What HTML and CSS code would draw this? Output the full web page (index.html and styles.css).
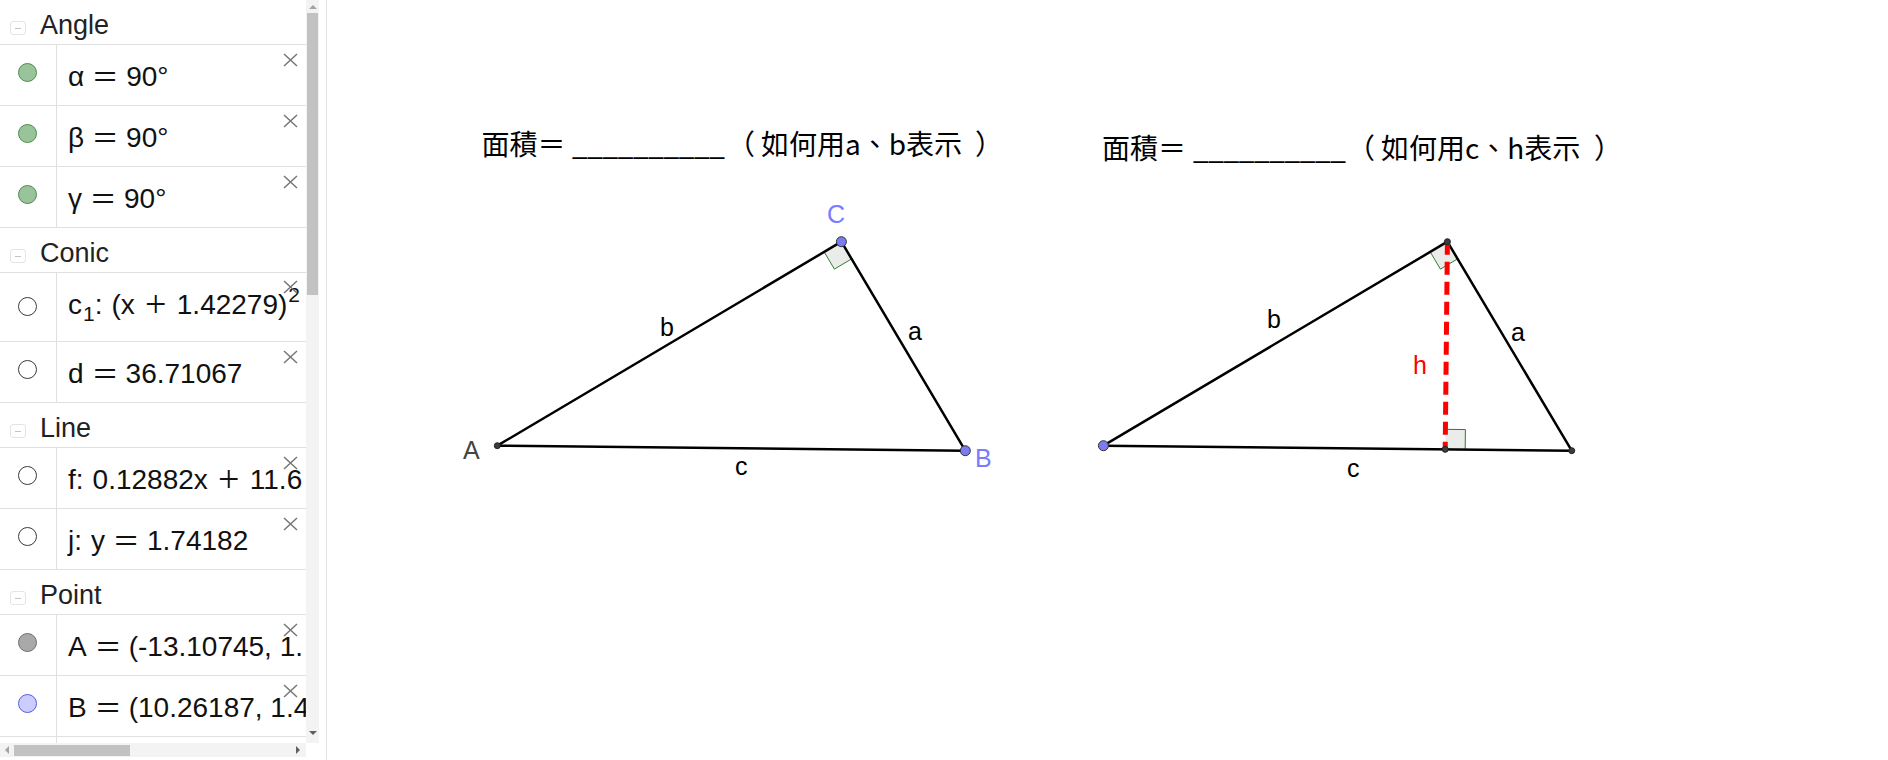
FILE: index.html
```html
<!DOCTYPE html>
<html lang="zh-Hant">
<head>
<meta charset="utf-8">
<title>GeoGebra</title>
<link rel="stylesheet" href="styles.css">
</head>
<body>
<div class="app">
  <aside class="algebra">
    <div class="av-viewport">
      <div class="group-head"><span class="toggle"></span><span class="group-title">Angle</span></div>
      <div class="item">
        <div class="marker"><span class="dot dot-angle"></span></div>
        <div class="formula">α<span class="op">=</span>90°</div>
        <svg class="close" viewBox="0 0 15 14"><path d="M1 1L14 13M14 1L1 13"/></svg>
      </div>
      <div class="item">
        <div class="marker"><span class="dot dot-angle"></span></div>
        <div class="formula">β<span class="op">=</span>90°</div>
        <svg class="close" viewBox="0 0 15 14"><path d="M1 1L14 13M14 1L1 13"/></svg>
      </div>
      <div class="item">
        <div class="marker"><span class="dot dot-angle"></span></div>
        <div class="formula">γ<span class="op">=</span>90°</div>
        <svg class="close" viewBox="0 0 15 14"><path d="M1 1L14 13M14 1L1 13"/></svg>
      </div>

      <div class="group-head"><span class="toggle"></span><span class="group-title">Conic</span></div>
      <div class="item item-tall">
        <div class="marker"><span class="dot dot-hidden"></span></div>
        <div class="formula">c<span class="sub">1</span><span class="colon">:</span>(x<span class="op op-plus">+</span>1.42279)<span class="sup">2</span></div>
        <svg class="close close-tall" viewBox="0 0 15 14"><path d="M1 1L14 13M14 1L1 13"/></svg>
      </div>
      <div class="item">
        <div class="marker"><span class="dot dot-hidden"></span></div>
        <div class="formula">d<span class="op">=</span>36.71067</div>
        <svg class="close" viewBox="0 0 15 14"><path d="M1 1L14 13M14 1L1 13"/></svg>
      </div>

      <div class="group-head"><span class="toggle"></span><span class="group-title">Line</span></div>
      <div class="item">
        <div class="marker"><span class="dot dot-hidden"></span></div>
        <div class="formula">f<span class="colon">:</span>0.12882x<span class="op op-plus">+</span>11.6</div>
        <svg class="close" viewBox="0 0 15 14"><path d="M1 1L14 13M14 1L1 13"/></svg>
      </div>
      <div class="item">
        <div class="marker"><span class="dot dot-hidden"></span></div>
        <div class="formula">j<span class="colon">:</span>y<span class="op">=</span>1.74182</div>
        <svg class="close" viewBox="0 0 15 14"><path d="M1 1L14 13M14 1L1 13"/></svg>
      </div>

      <div class="group-head"><span class="toggle"></span><span class="group-title">Point</span></div>
      <div class="item">
        <div class="marker"><span class="dot dot-gray"></span></div>
        <div class="formula">A<span class="op">=</span>(-13.10745, 1.</div>
        <svg class="close" viewBox="0 0 15 14"><path d="M1 1L14 13M14 1L1 13"/></svg>
      </div>
      <div class="item">
        <div class="marker"><span class="dot dot-blue"></span></div>
        <div class="formula">B<span class="op">=</span>(10.26187, 1.4</div>
        <svg class="close" viewBox="0 0 15 14"><path d="M1 1L14 13M14 1L1 13"/></svg>
      </div>
      <div class="item">
        <div class="marker"></div>
        <div class="formula"></div>
      </div>
    </div>

    <div class="vscroll">
      <span class="arrow arrow-up"></span>
      <span class="vthumb"></span>
      <span class="vspace"></span>
      <span class="arrow arrow-down"></span>
    </div>
    <div class="hscroll">
      <span class="arrow arrow-left"></span>
      <span class="hthumb"></span>
      <span class="hspace"></span>
      <span class="arrow arrow-right"></span>
    </div>
    <div class="corner"></div>
  </aside>

  <main class="graphics">
    <svg class="canvas" viewBox="327 0 1561 760" width="1561" height="760">
      <!-- titles -->
      <text class="title" y="155"><tspan x="481.5">面積＝</tspan><tspan x="572" class="blank">__________</tspan><tspan x="727">（</tspan><tspan x="761">如何用a、b表示</tspan><tspan x="975">）</tspan></text>
      <text class="title" y="159"><tspan x="1102">面積＝</tspan><tspan x="1193" class="blank">__________</tspan><tspan x="1347">（</tspan><tspan x="1381">如何用c、h表示</tspan><tspan x="1594">）</tspan></text>

      <!-- triangle 1 -->
      <polygon class="ra-fill" points="841.4,241.7 824.2,251.9 834.4,269.1 851.6,258.9"/>
      <polyline class="ra-edge" points="824.2,251.9 834.4,269.1 851.6,258.9"/>
      <line class="seg" x1="497.3" y1="445.7" x2="841.4" y2="241.7"/>
      <line class="seg" x1="841.4" y1="241.7" x2="965.3" y2="450.7"/>
      <line class="seg" x1="497.3" y1="445.7" x2="965.3" y2="450.7"/>
      <circle class="pt-dark" cx="497.3" cy="445.7" r="3"/>
      <circle class="pt-blue" cx="841.4" cy="241.7" r="5"/>
      <circle class="pt-blue" cx="965.3" cy="450.7" r="5"/>
      <text class="lbl lbl-blue" x="827" y="223">C</text>
      <text class="lbl lbl-blue" x="975" y="467">B</text>
      <text class="lbl lbl-gray" x="463" y="459">A</text>
      <text class="lbl" x="660" y="336">b</text>
      <text class="lbl" x="908" y="340">a</text>
      <text class="lbl" x="735" y="475">c</text>

      <!-- triangle 2 -->
      <polygon class="ra-fill" points="1447.4,241.7 1430.2,251.9 1440.4,269.1 1457.6,258.9"/>
      <polyline class="ra-edge" points="1430.2,251.9 1440.4,269.1 1457.6,258.9"/>
      <polygon class="ra-fill" points="1445.2,449.35 1465.2,449.56 1465.4,429.56 1445.4,429.35"/>
      <polyline class="ra-edge" points="1465.2,449.56 1465.4,429.56 1445.4,429.35"/>
      <line class="seg" x1="1103.4" y1="445.7" x2="1447.4" y2="241.7"/>
      <line class="seg" x1="1447.4" y1="241.7" x2="1571.7" y2="450.7"/>
      <line class="seg" x1="1103.4" y1="445.7" x2="1571.7" y2="450.7"/>
      <line class="height" x1="1447.4" y1="241.7" x2="1445.2" y2="449.35"/>
      <circle class="pt-blue" cx="1103.4" cy="445.7" r="5"/>
      <circle class="pt-dark" cx="1447.4" cy="241.7" r="3"/>
      <circle class="pt-dark" cx="1571.7" cy="450.7" r="3"/>
      <circle class="pt-dark" cx="1445.2" cy="449.35" r="3"/>
      <text class="lbl" x="1267" y="328">b</text>
      <text class="lbl" x="1511" y="341">a</text>
      <text class="lbl lbl-red" x="1413" y="374">h</text>
      <text class="lbl" x="1347" y="477">c</text>
    </svg>
  </main>
</div>
</body>
</html>
```

FILE: styles.css
```css
* { box-sizing: border-box; }

html, body {
  margin: 0;
  padding: 0;
  width: 1888px;
  height: 760px;
  overflow: hidden;
  background: #ffffff;
  font-family: "Liberation Sans", Arial, sans-serif;
}

.app {
  display: flex;
  width: 1888px;
  height: 760px;
}

/* ---------- algebra view ---------- */
.algebra {
  width: 327px;
  height: 760px;
  flex: none;
  display: grid;
  grid-template-columns: 306px 13px;
  grid-template-rows: 743px 17px;
  border-right: 1px solid #e1e1e1;
  background: #ffffff;
}

.av-viewport {
  overflow: hidden;
  background: #ffffff;
}

.group-head {
  display: flex;
  height: 45px;
  border-bottom: 1px solid #e0e0e0;
}

.toggle {
  position: relative;
  width: 16px;
  height: 14px;
  margin: 21px 0 0 10px;
  border: 1px solid #e4e4e4;
  border-radius: 3px;
}

.toggle::after {
  content: "";
  position: absolute;
  left: 4px;
  top: 6px;
  width: 6px;
  height: 1px;
  background: #c4c4c4;
}

.group-title {
  margin-left: 14px;
  padding-top: 5px;
  line-height: 40px;
  font-size: 27px;
  color: #222222;
}

.item {
  position: relative;
  display: flex;
  height: 61px;
  border-bottom: 1px solid #e0e0e0;
}

.item-tall { height: 69px; }

.marker {
  width: 57px;
  flex: none;
  display: flex;
  justify-content: center;
  align-items: flex-start;
  padding-top: 18px;
  padding-right: 1px;
  border-right: 1px solid #e0e0e0;
}

.item-tall .marker { padding-top: 24px; }

.dot {
  width: 19px;
  height: 19px;
  border-radius: 50%;
  border: 1px solid #444444;
  background: #ffffff;
}

.dot-angle { background: #99c399; border-color: #4e8c4e; }
.dot-hidden { background: #ffffff; border-color: #3a3a3a; }
.dot-gray { background: #a9a9a9; border-color: #6e6e6e; }
.dot-blue { background: #ccccff; border-color: #5a5ae0; }

.formula {
  padding: 4px 0 0 11px;
  line-height: 56px;
  font-size: 28px;
  color: #111111;
  white-space: nowrap;
}

.op {
  display: inline-block;
  width: 42px;
  text-align: center;
  transform: scaleX(1.45);
}

.op-plus {
  line-height: 1;
  font-family: "Liberation Serif", "Times New Roman", serif;
  font-size: 38px;
  vertical-align: -3px;
  transform: none;
}

.colon {
  display: inline-block;
  margin-right: 9px;
}

.sub {
  font-size: 21px;
  line-height: 0;
  vertical-align: -7px;
  margin-left: 1px;
}

.sup {
  font-size: 21px;
  line-height: 0;
  vertical-align: 12px;
  margin-left: 1px;
}

.close {
  position: absolute;
  right: 8px;
  top: 8px;
  width: 15px;
  height: 14px;
}

.close-tall { top: 7px; }

.close path {
  stroke: #767676;
  stroke-width: 1.5;
  fill: none;
}

/* scrollbars */
.vscroll {
  display: flex;
  flex-direction: column;
  align-items: center;
  background: #f3f3f3;
  padding: 0 1px;
}

.vthumb {
  width: 11px;
  height: 282px;
  margin-top: 4px;
  background: #c2c2c2;
}

.vspace { flex: 1; }

.hscroll {
  display: flex;
  align-items: center;
  background: #f3f3f3;
  height: 14px;
}

.hthumb {
  width: 116px;
  height: 11px;
  margin-left: 5px;
  background: #c2c2c2;
}

.hspace { flex: 1; }

.corner { background: #ffffff; }

.arrow {
  width: 0;
  height: 0;
  flex: none;
}

.arrow-up {
  margin-top: 5px;
  border-left: 4px solid transparent;
  border-right: 4px solid transparent;
  border-bottom: 4px solid #a3a3a3;
}

.arrow-down {
  margin-bottom: 8px;
  border-left: 4px solid transparent;
  border-right: 4px solid transparent;
  border-top: 4px solid #606060;
}

.arrow-left {
  margin-left: 5px;
  border-top: 4px solid transparent;
  border-bottom: 4px solid transparent;
  border-right: 4px solid #a3a3a3;
}

.arrow-right {
  margin-right: 6px;
  border-top: 4px solid transparent;
  border-bottom: 4px solid transparent;
  border-left: 4px solid #606060;
}

/* ---------- graphics view ---------- */
.graphics {
  flex: 1;
  height: 760px;
  background: #ffffff;
}

.canvas { display: block; }

.title {
  font-family: "Noto Sans CJK TC", "Noto Sans CJK SC", sans-serif;
  font-size: 28px;
  fill: #000000;
}

.blank { letter-spacing: -0.4px; }

.seg {
  stroke: #000000;
  stroke-width: 2.5;
  stroke-linecap: round;
}

.height {
  stroke: #ff0000;
  stroke-width: 5;
  stroke-dasharray: 13 7;
}

.ra-fill {
  fill: #e9ece9;
  stroke: none;
}

.ra-edge {
  fill: none;
  stroke: #2f7d2f;
  stroke-width: 1;
}

.pt-blue {
  fill: #7b7bf2;
  stroke: #333333;
  stroke-width: 1;
}

.pt-dark {
  fill: #3c3c3c;
  stroke: #222222;
  stroke-width: 1;
}

.lbl {
  font-family: "Liberation Sans", Arial, sans-serif;
  font-size: 25px;
  fill: #000000;
}

.lbl-blue { fill: #7b7bff; }
.lbl-gray { fill: #444444; }
.lbl-red { fill: #ff0000; }
```
